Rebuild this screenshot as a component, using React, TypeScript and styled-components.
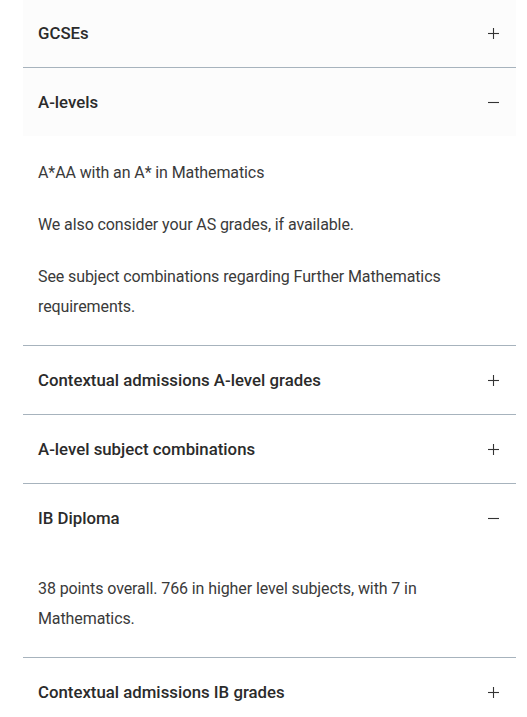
import styled, { createGlobalStyle } from 'styled-components';

const GlobalStyle = createGlobalStyle`
  body {
    margin: 0;
    background: #fff;
    font-family: Roboto, "Liberation Sans", Arial, sans-serif;
  }
`;

const Page = styled.div`
  margin-top: -1px;
  padding: 0 11px 0 23px;
`;
const Item = styled.div`
  border-bottom: 1px solid #a7b3bd;
`;
const Header = styled.div<{ shaded?: boolean }>`
  height: 68px;
  display: flex;
  align-items: center;
  justify-content: space-between;
  padding: 0 17px 0 15px;
  background: ${({ shaded }) => (shaded ? '#fcfcfc' : '#fff')};
`;
const Title = styled.span`
  font-size: 16.8px;
  font-weight: 500;
  color: #2b2b2b;
`;
const Panel = styled.div`
  padding: 22px 15px 23px;
`;
const Para = styled.p`
  margin: 0 0 22px;
  font-size: 16px;
  line-height: 30px;
  letter-spacing: -0.1px;
  color: #3a3a3a;
  &:last-child {
    margin-bottom: 0;
  }
`;

const Toggle = ({ open }: { open: boolean }) => (
  <svg width="11" height="11" viewBox="0 0 11 11">
    <path d="M0 5.5h11" stroke="#333" strokeWidth="1.1" />
    {!open && <path d="M5.5 0v11" stroke="#333" strokeWidth="1.1" />}
  </svg>
);

interface Section {
  title: string;
  body?: string[];
  shaded?: boolean;
}

const sections: Section[] = [
  { title: 'GCSEs', shaded: true },
  {
    title: 'A-levels',
    shaded: true,
    body: [
      'A*AA with an A* in Mathematics',
      'We also consider your AS grades, if available.',
      'See subject combinations regarding Further Mathematics requirements.',
    ],
  },
  { title: 'Contextual admissions A-level grades' },
  { title: 'A-level subject combinations' },
  {
    title: 'IB Diploma',
    body: ['38 points overall. 766 in higher level subjects, with 7 in Mathematics.'],
  },
  { title: 'Contextual admissions IB grades' },
];

const App = () => {
  return (
    <Page>
      <GlobalStyle />
      {sections.map((s) => (
        <Item key={s.title}>
          <Header shaded={s.shaded}>
            <Title>{s.title}</Title>
            <Toggle open={!!s.body} />
          </Header>
          {s.body && (
            <Panel>
              {s.body.map((p) => (
                <Para key={p}>{p}</Para>
              ))}
            </Panel>
          )}
        </Item>
      ))}
    </Page>
  );
};

export default App;
